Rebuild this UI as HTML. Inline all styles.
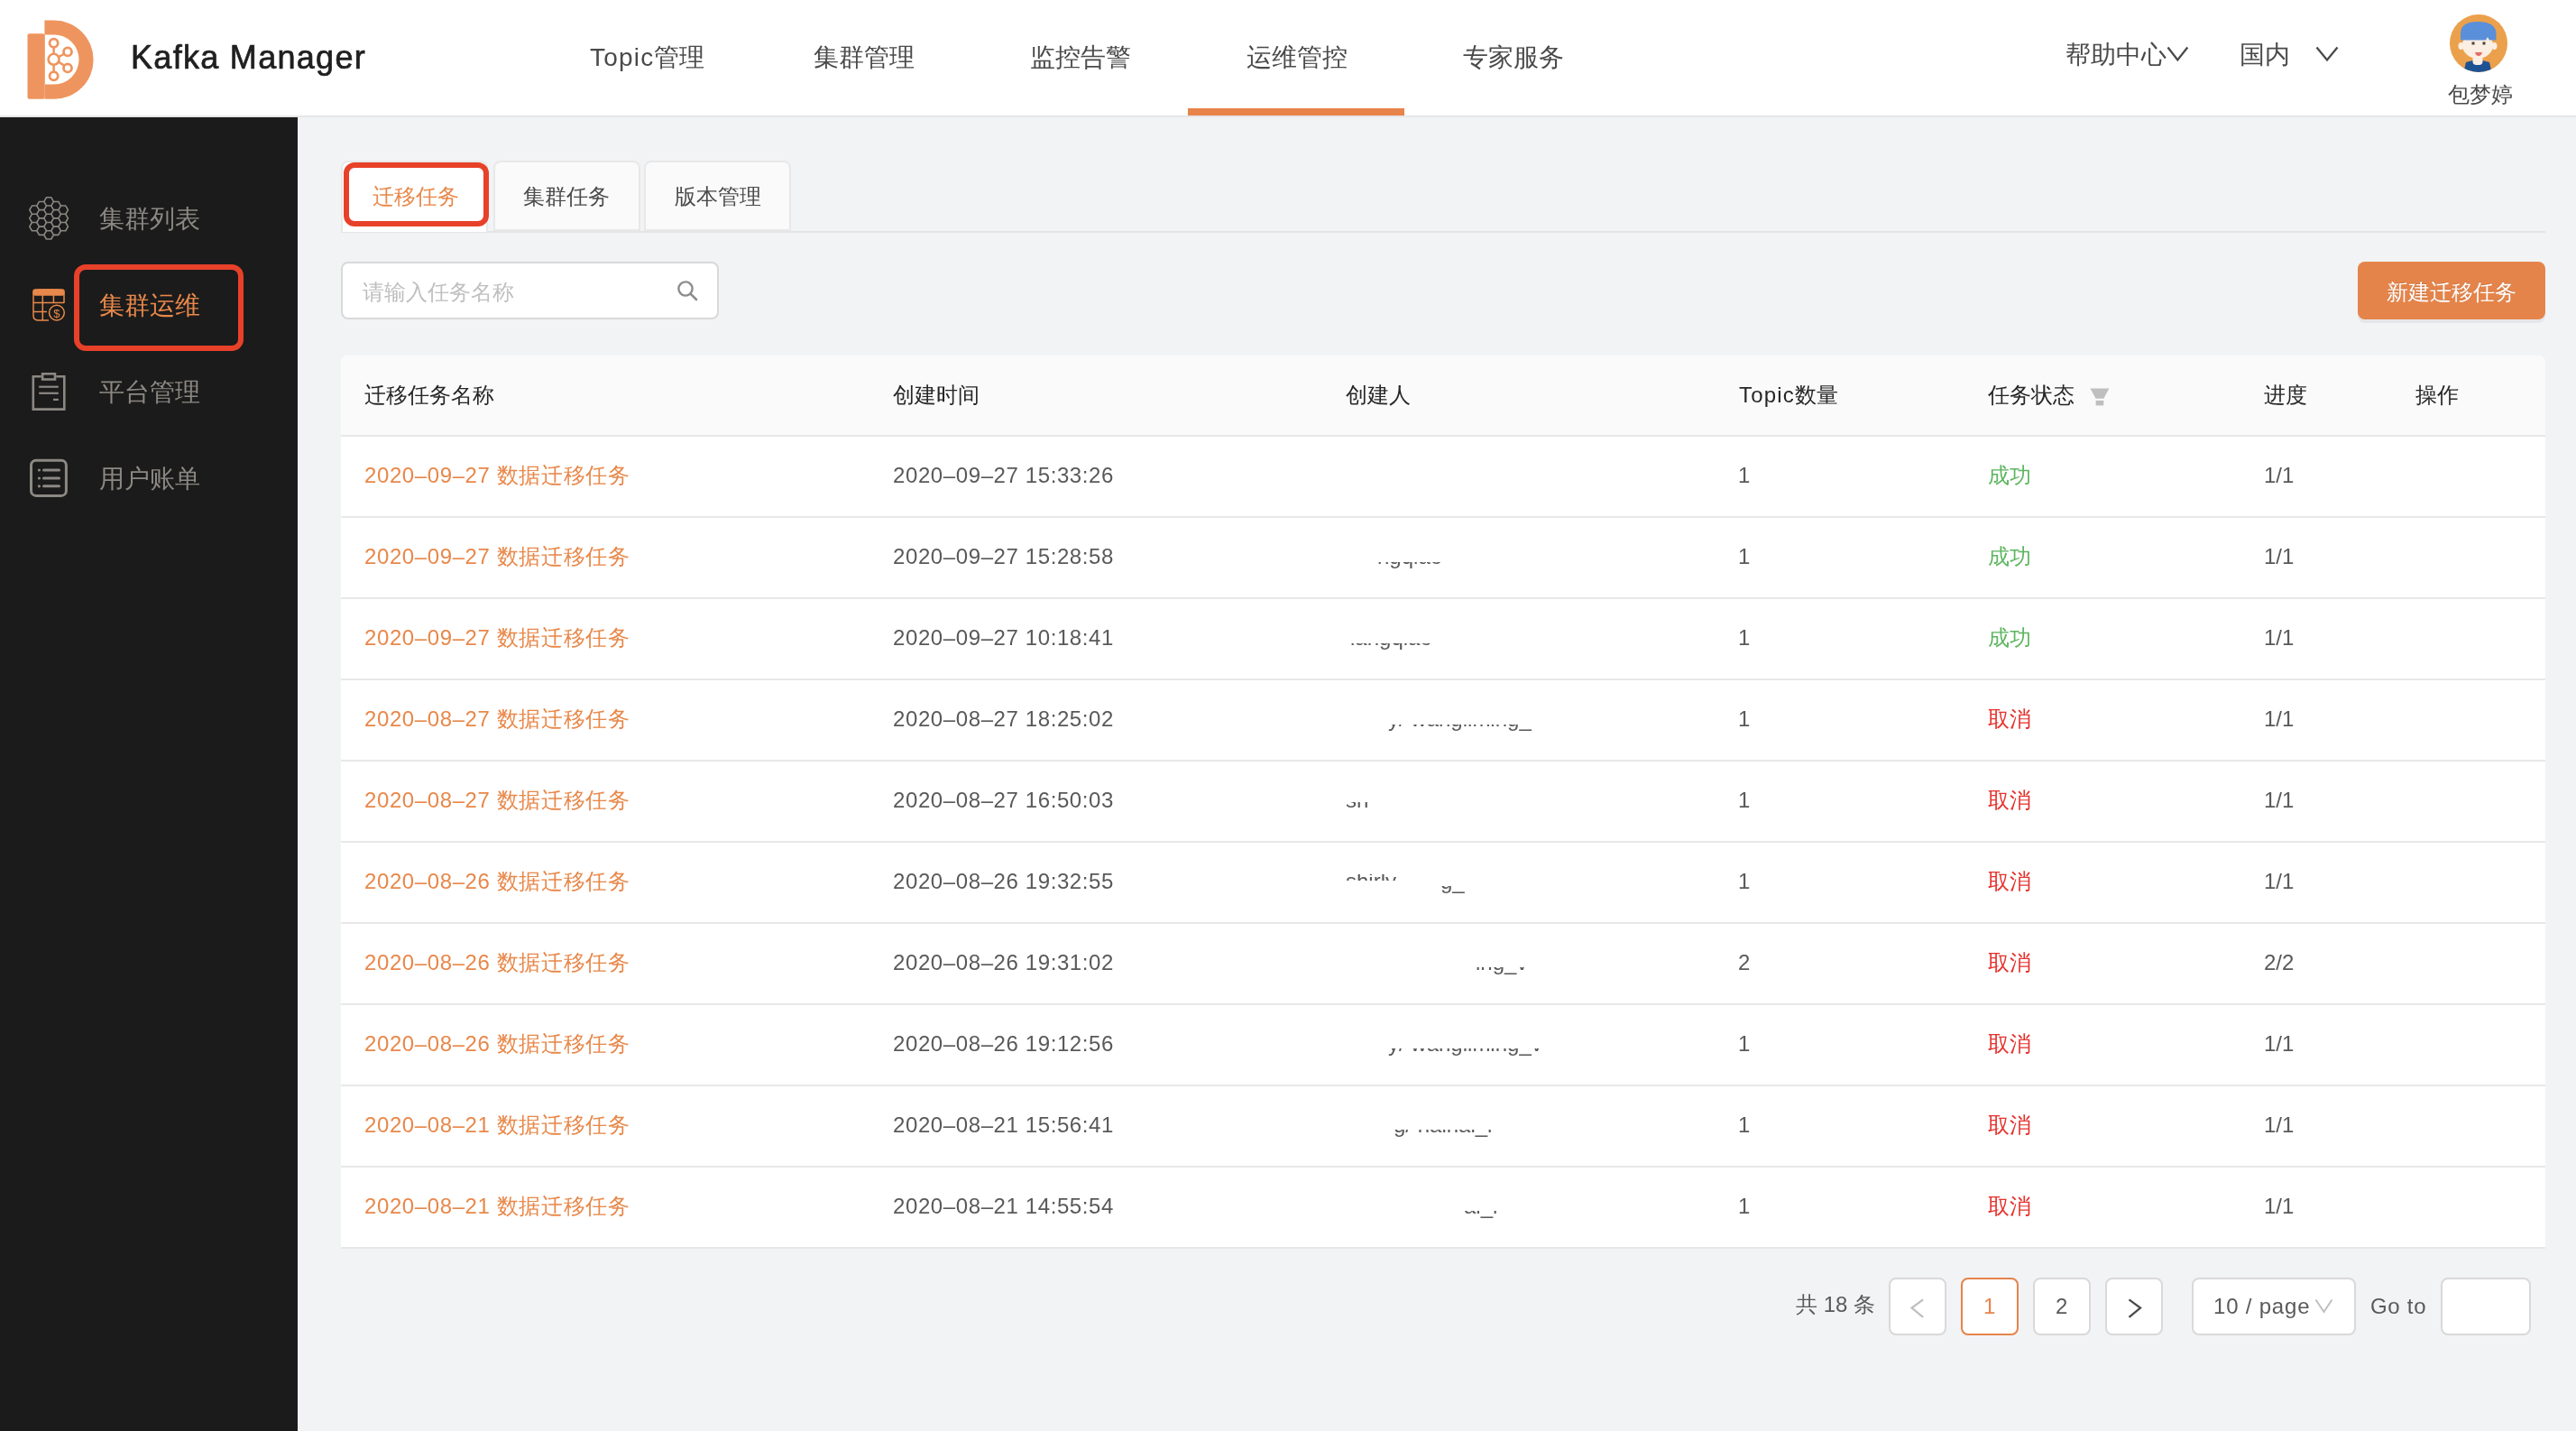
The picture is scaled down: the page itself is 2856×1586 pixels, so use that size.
<!DOCTYPE html>
<html><head><meta charset="utf-8">
<style>
*{box-sizing:border-box;margin:0;padding:0}
html,body{width:2856px;height:1586px;overflow:hidden}
body{position:relative;background:#f2f3f5;font-family:"Liberation Sans",sans-serif;color:#595959}
#root{position:absolute;left:0;top:0;width:2856px;height:1586px;background:#f2f3f5;will-change:transform;overflow:hidden}
.a{position:absolute;white-space:nowrap}
.nav{font-size:28px;line-height:28px;color:#4a4a4a}
.side{font-size:28px;line-height:28px;color:#8c8883}
.t24{font-size:24px;line-height:24px}
.box{position:absolute;background:#fff;border:2px solid #d9d9d9;border-radius:8px}
.th{color:#262626}
.td{color:#595959}
.lk{color:#e8884a}
.ls{letter-spacing:1.2px}
.dt{letter-spacing:0.6px}
.clip{position:absolute;overflow:hidden}
.clip span{position:absolute;left:0;white-space:nowrap;font-size:24px;line-height:24px;color:#595959}
</style></head><body><div id="root">
<div class="a" style="left:0;top:0;width:2856px;height:128px;background:#fff"></div>
<div class="a" style="left:0;top:128px;width:2856px;height:2px;background:#e6e6e6"></div>
<div class="a" style="left:0;top:130px;width:330px;height:1456px;background:#1b1b1b"></div>

<svg class="a" style="left:0;top:0" width="130" height="128" viewBox="0 0 130 128">
  <rect x="30.5" y="37.3" width="19" height="72.5" rx="2" fill="#ee955f"/>
  <path d="M49.4 22.6 H60 A43.6 43.6 0 0 1 60 109.8 H49.4 Z M50 38.5 V93.5 H60 A27.5 27.5 0 0 0 60 38.5 Z" fill="#ee955f" fill-rule="evenodd"/>
  <g fill="none" stroke="#ee955f" stroke-width="2">
    <circle cx="59.6" cy="65.8" r="6" stroke-width="2.6"/>
    <circle cx="59.6" cy="47.7" r="4.6" stroke-width="2.8"/>
    <circle cx="75" cy="57.4" r="4.5" stroke-width="2.8"/>
    <circle cx="75" cy="75.4" r="4.5" stroke-width="2.8"/>
    <circle cx="59.6" cy="84.2" r="4.6" stroke-width="2.8"/>
    <path d="M59.6 52.7 V59.5 M59.6 72.1 V79.2 M65.2 62.8 L70.8 60 M65.2 68.8 L70.8 72.4" stroke-width="2.5"/>
  </g>
</svg>
<div class="a" style="left:145px;top:46px;font-size:36px;line-height:36px;color:#1f1f1f;letter-spacing:1.3px;-webkit-text-stroke:0.7px #1f1f1f">Kafka Manager</div>

<div class="a nav" style="left:654px;top:50px"><span class="ls">Topic</span>管理</div>
<div class="a nav" style="left:902px;top:50px">集群管理</div>
<div class="a nav" style="left:1142px;top:50px">监控告警</div>
<div class="a nav" style="left:1382px;top:50px">运维管控</div>
<div class="a nav" style="left:1622px;top:50px">专家服务</div>
<div class="a" style="left:1317px;top:120px;width:240px;height:8px;background:#e8834a"></div>

<div class="a nav" style="left:2290px;top:47px">帮助中心</div>
<svg class="a" style="left:2400px;top:50px" width="30" height="20"><path d="M3.5 2.5 L14.3 16.5 L25.3 2.5" fill="none" stroke="#4a4a4a" stroke-width="2.3"/></svg>
<div class="a nav" style="left:2483px;top:47px">国内</div>
<svg class="a" style="left:2565px;top:50px" width="30" height="20"><path d="M3.5 2.5 L15 16.5 L26.5 2.5" fill="none" stroke="#4a4a4a" stroke-width="2.3"/></svg>

<svg class="a" style="left:2715px;top:15px" width="66" height="66" viewBox="2715 15 66 66">
  <defs><clipPath id="cc"><circle cx="2748" cy="48" r="32"/></clipPath></defs>
  <circle cx="2748" cy="48" r="32" fill="#eba04b"/>
  <g clip-path="url(#cc)">
    <path d="M2734 69 Q2747 64 2760 69 L2763 82 H2731 Z" fill="#1f5293"/>
    <rect x="2741.5" y="60" width="11" height="12" rx="4" fill="#fbeee2"/>
    <ellipse cx="2747" cy="50" rx="17" ry="15" fill="#fbeee2"/>
    <ellipse cx="2728.5" cy="51" rx="3" ry="4" fill="#fbeee2"/>
    <ellipse cx="2765.5" cy="51" rx="3" ry="4" fill="#fbeee2"/>
    <path d="M2728 44.5 V36 Q2729 24 2747 24 Q2766 24 2767.5 36 V44.5 H2760 L2758 41 L2756 44.5 Z" fill="#5a8fd9"/>
    <rect x="2740.5" y="46.5" width="3" height="3" fill="#4a4040"/>
    <rect x="2752.5" y="46.5" width="3" height="3" fill="#4a4040"/>
    <path d="M2744 58 H2752 Q2751 62 2748 62 Q2745 62 2744 58 Z" fill="#e86a6a"/>
  </g>
</svg>
<div class="a" style="left:2714px;top:93px;font-size:23.5px;line-height:24px;color:#4a4a4a">包梦婷</div>

<div class="a side" style="left:110px;top:229px">集群列表</div>
<div class="a side" style="left:110px;top:325px;color:#e8884a">集群运维</div>
<div class="a side" style="left:110px;top:421px">平台管理</div>
<div class="a side" style="left:110px;top:517px">用户账单</div>
<div class="a" style="left:82px;top:293px;width:188px;height:96px;border:6px solid #e8412a;border-radius:13px"></div>

<svg class="a" style="left:0;top:130px" width="100" height="450" viewBox="0 130 100 450">
  <path d="M43.44 232.67 L40.77 237.28 L35.45 237.28 L32.78 232.67 L35.45 228.05 L40.77 228.05Z M43.44 241.90 L40.77 246.52 L35.45 246.52 L32.78 241.90 L35.45 237.28 L40.77 237.28Z M43.44 251.13 L40.77 255.75 L35.45 255.75 L32.78 251.13 L35.45 246.52 L40.77 246.52Z M51.44 228.05 L48.77 232.67 L43.44 232.67 L40.78 228.05 L43.44 223.44 L48.77 223.44Z M51.44 237.28 L48.77 241.90 L43.44 241.90 L40.78 237.28 L43.44 232.67 L48.77 232.67Z M51.44 246.52 L48.77 251.13 L43.44 251.13 L40.78 246.52 L43.44 241.90 L48.77 241.90Z M51.44 255.75 L48.77 260.36 L43.44 260.36 L40.78 255.75 L43.44 251.13 L48.77 251.13Z M59.43 223.44 L56.77 228.05 L51.44 228.05 L48.77 223.44 L51.44 218.82 L56.77 218.82Z M59.43 232.67 L56.77 237.28 L51.44 237.28 L48.77 232.67 L51.44 228.05 L56.77 228.05Z M59.43 241.90 L56.77 246.52 L51.44 246.52 L48.77 241.90 L51.44 237.28 L56.77 237.28Z M59.43 251.13 L56.77 255.75 L51.44 255.75 L48.77 251.13 L51.44 246.52 L56.77 246.52Z M59.43 260.36 L56.77 264.98 L51.44 264.98 L48.77 260.36 L51.44 255.75 L56.77 255.75Z M67.42 228.05 L64.76 232.67 L59.43 232.67 L56.77 228.05 L59.43 223.44 L64.76 223.44Z M67.42 237.28 L64.76 241.90 L59.43 241.90 L56.77 237.28 L59.43 232.67 L64.76 232.67Z M67.42 246.52 L64.76 251.13 L59.43 251.13 L56.77 246.52 L59.43 241.90 L64.76 241.90Z M67.42 255.75 L64.76 260.36 L59.43 260.36 L56.77 255.75 L59.43 251.13 L64.76 251.13Z M75.42 232.67 L72.76 237.28 L67.43 237.28 L64.76 232.67 L67.42 228.05 L72.76 228.05Z M75.42 241.90 L72.76 246.52 L67.43 246.52 L64.76 241.90 L67.42 237.28 L72.76 237.28Z M75.42 251.13 L72.76 255.75 L67.43 255.75 L64.76 251.13 L67.42 246.52 L72.76 246.52Z" fill="none" stroke="#8c8883" stroke-width="1.6" stroke-linejoin="round"/>
  <g fill="none" stroke="#e8884a" stroke-width="1.5">
    <path d="M37 345 V327 Q37 321 43 321 H65 Q71 321 71 327 V336"/>
    <path d="M37 345 V350 Q37 355 43 355 H54"/>
    <path d="M37 335.5 H71 M37 345.6 H52 M47.3 327 V355 M59.4 327 V336"/>
    <circle cx="62.9" cy="346.6" r="8.4"/>
  </g>
  <rect x="36.2" y="320.2" width="35.6" height="7.5" rx="3" fill="#e8884a"/>
  <text x="62.9" y="351.5" font-size="13" text-anchor="middle" fill="#e8884a" font-family="Liberation Sans">$</text>
  <g fill="none" stroke="#8c8883" stroke-width="2.6">
    <path d="M45.8 417.3 H36.8 V453.6 H71.3 V417.3 H62.3"/>
    <rect x="47.1" y="414.3" width="13.9" height="6.2"/>
  </g>
  <g fill="#8c8883">
    <rect x="43.2" y="427.6" width="21.6" height="2.2"/>
    <rect x="43.2" y="434.7" width="21.6" height="2.2"/>
    <rect x="59" y="441.8" width="5.8" height="2.2"/>
  </g>
  <rect x="34.5" y="510.3" width="38.9" height="39.1" rx="5.5" fill="none" stroke="#8c8883" stroke-width="3"/>
  <g fill="#8c8883"><circle cx="43.4" cy="521" r="1.6"/><circle cx="43.4" cy="530" r="1.6"/><circle cx="43.4" cy="538.8" r="1.6"/></g>
  <path d="M48.5 521 H65.5 M48.5 530 H65.5 M48.5 538.8 H65.5" stroke="#8c8883" stroke-width="3" stroke-linecap="round"/>
</svg>

<div class="a" style="left:378px;top:256px;width:2444px;height:2px;background:#e3e4e6"></div>
<div class="a" style="left:378px;top:178px;width:163px;height:79px;background:#fff;border:2px solid #e8e8e8;border-bottom:none;border-radius:8px 8px 0 0"></div>
<div class="a" style="left:547px;top:178px;width:163px;height:78px;background:#fafafa;border:2px solid #e8e8e8;border-radius:8px 8px 0 0"></div>
<div class="a" style="left:714px;top:178px;width:163px;height:78px;background:#fafafa;border:2px solid #e8e8e8;border-radius:8px 8px 0 0"></div>
<div class="a t24" style="left:413px;top:206px;color:#e8884a">迁移任务</div>
<div class="a t24" style="left:580px;top:206px;color:#4a4a4a">集群任务</div>
<div class="a t24" style="left:748px;top:206px;color:#4a4a4a">版本管理</div>
<div class="a" style="left:381px;top:180px;width:161px;height:71px;border:6px solid #e8412a;border-radius:12px"></div>

<div class="box" style="left:378px;top:290px;width:419px;height:64px"></div>
<div class="a t24" style="left:402px;top:312px;color:#bfbfbf">请输入任务名称</div>
<svg class="a" style="left:748px;top:308px" width="30" height="30"><circle cx="12" cy="12" r="7.6" fill="none" stroke="#8c8c8c" stroke-width="2.4"/><path d="M17.6 17.6 L24 24" stroke="#8c8c8c" stroke-width="2.6" stroke-linecap="round"/></svg>

<div class="a" style="left:2614px;top:290px;width:208px;height:64px;background:#e5844a;border-radius:8px;box-shadow:0 4px 0 rgba(0,0,0,.05)"></div>
<div class="a t24" style="left:2646px;top:312px;color:#fff;text-shadow:0 -1px 0 rgba(0,0,0,.12)">新建迁移任务</div>

<div class="a" style="left:378px;top:394px;width:2444px;height:990px;background:#fff;border-radius:8px 8px 0 0"></div>
<div class="a" style="left:378px;top:394px;width:2444px;height:88px;background:#fafafa;border-radius:8px 8px 0 0"></div>
<div class="a" style="left:378px;top:482px;width:2444px;height:2px;background:#e8e8e8"></div>

<div class="a t24 th" style="left:404px;top:426px">迁移任务名称</div>
<div class="a t24 th" style="left:990px;top:426px">创建时间</div>
<div class="a t24 th" style="left:1492px;top:426px">创建人</div>
<div class="a t24 th" style="left:1928px;top:426px"><span class="ls">Topic</span>数量</div>
<div class="a t24 th" style="left:2204px;top:426px">任务状态</div>
<div class="a t24 th" style="left:2510px;top:426px">进度</div>
<div class="a t24 th" style="left:2678px;top:426px">操作</div>
<svg class="a" style="left:2316px;top:429px" width="24" height="22"><path d="M1.4 1.5 H22.4 L16.3 12.7 H7.6 Z" fill="#bfbfbf"/><rect x="7.6" y="14.9" width="8.7" height="5.5" fill="#bfbfbf"/></svg>
<div class="a" style="left:378px;top:572px;width:2444px;height:2px;background:#e8e8e8"></div>
<div class="a t24 lk dt" style="left:404px;top:515px">2020–09–27 数据迁移任务</div>
<div class="a t24 td dt" style="left:990px;top:515px">2020–09–27 15:33:26</div>
<div class="a t24 td" style="left:1927px;top:515px">1</div>
<div class="a t24" style="left:2204px;top:515px;color:#5cb55f">成功</div>
<div class="a t24 td" style="left:2510px;top:515px">1/1</div>
<div class="a" style="left:378px;top:662px;width:2444px;height:2px;background:#e8e8e8"></div>
<div class="a t24 lk dt" style="left:404px;top:605px">2020–09–27 数据迁移任务</div>
<div class="a t24 td dt" style="left:990px;top:605px">2020–09–27 15:28:58</div>
<div class="a t24 td" style="left:1927px;top:605px">1</div>
<div class="a t24" style="left:2204px;top:605px;color:#5cb55f">成功</div>
<div class="a t24 td" style="left:2510px;top:605px">1/1</div>
<div class="a" style="left:378px;top:752px;width:2444px;height:2px;background:#e8e8e8"></div>
<div class="a t24 lk dt" style="left:404px;top:695px">2020–09–27 数据迁移任务</div>
<div class="a t24 td dt" style="left:990px;top:695px">2020–09–27 10:18:41</div>
<div class="a t24 td" style="left:1927px;top:695px">1</div>
<div class="a t24" style="left:2204px;top:695px;color:#5cb55f">成功</div>
<div class="a t24 td" style="left:2510px;top:695px">1/1</div>
<div class="a" style="left:378px;top:842px;width:2444px;height:2px;background:#e8e8e8"></div>
<div class="a t24 lk dt" style="left:404px;top:785px">2020–08–27 数据迁移任务</div>
<div class="a t24 td dt" style="left:990px;top:785px">2020–08–27 18:25:02</div>
<div class="a t24 td" style="left:1927px;top:785px">1</div>
<div class="a t24" style="left:2204px;top:785px;color:#e5312c">取消</div>
<div class="a t24 td" style="left:2510px;top:785px">1/1</div>
<div class="a" style="left:378px;top:932px;width:2444px;height:2px;background:#e8e8e8"></div>
<div class="a t24 lk dt" style="left:404px;top:875px">2020–08–27 数据迁移任务</div>
<div class="a t24 td dt" style="left:990px;top:875px">2020–08–27 16:50:03</div>
<div class="a t24 td" style="left:1927px;top:875px">1</div>
<div class="a t24" style="left:2204px;top:875px;color:#e5312c">取消</div>
<div class="a t24 td" style="left:2510px;top:875px">1/1</div>
<div class="a" style="left:378px;top:1022px;width:2444px;height:2px;background:#e8e8e8"></div>
<div class="a t24 lk dt" style="left:404px;top:965px">2020–08–26 数据迁移任务</div>
<div class="a t24 td dt" style="left:990px;top:965px">2020–08–26 19:32:55</div>
<div class="a t24 td" style="left:1927px;top:965px">1</div>
<div class="a t24" style="left:2204px;top:965px;color:#e5312c">取消</div>
<div class="a t24 td" style="left:2510px;top:965px">1/1</div>
<div class="a" style="left:378px;top:1112px;width:2444px;height:2px;background:#e8e8e8"></div>
<div class="a t24 lk dt" style="left:404px;top:1055px">2020–08–26 数据迁移任务</div>
<div class="a t24 td dt" style="left:990px;top:1055px">2020–08–26 19:31:02</div>
<div class="a t24 td" style="left:1927px;top:1055px">2</div>
<div class="a t24" style="left:2204px;top:1055px;color:#e5312c">取消</div>
<div class="a t24 td" style="left:2510px;top:1055px">2/2</div>
<div class="a" style="left:378px;top:1202px;width:2444px;height:2px;background:#e8e8e8"></div>
<div class="a t24 lk dt" style="left:404px;top:1145px">2020–08–26 数据迁移任务</div>
<div class="a t24 td dt" style="left:990px;top:1145px">2020–08–26 19:12:56</div>
<div class="a t24 td" style="left:1927px;top:1145px">1</div>
<div class="a t24" style="left:2204px;top:1145px;color:#e5312c">取消</div>
<div class="a t24 td" style="left:2510px;top:1145px">1/1</div>
<div class="a" style="left:378px;top:1292px;width:2444px;height:2px;background:#e8e8e8"></div>
<div class="a t24 lk dt" style="left:404px;top:1235px">2020–08–21 数据迁移任务</div>
<div class="a t24 td dt" style="left:990px;top:1235px">2020–08–21 15:56:41</div>
<div class="a t24 td" style="left:1927px;top:1235px">1</div>
<div class="a t24" style="left:2204px;top:1235px;color:#e5312c">取消</div>
<div class="a t24 td" style="left:2510px;top:1235px">1/1</div>
<div class="a" style="left:378px;top:1382px;width:2444px;height:2px;background:#e8e8e8"></div>
<div class="a t24 lk dt" style="left:404px;top:1325px">2020–08–21 数据迁移任务</div>
<div class="a t24 td dt" style="left:990px;top:1325px">2020–08–21 14:55:54</div>
<div class="a t24 td" style="left:1927px;top:1325px">1</div>
<div class="a t24" style="left:2204px;top:1325px;color:#e5312c">取消</div>
<div class="a t24 td" style="left:2510px;top:1325px">1/1</div>
<div class="clip" style="left:1527px;top:623px;width:200px;height:9px"><span style="top:-18px">ngqiao</span></div>
<div class="clip" style="left:1497px;top:713px;width:200px;height:9px"><span style="top:-18px">iangqiao</span></div>
<div class="clip" style="left:1539px;top:803px;width:200px;height:10px"><span style="top:-18px">y/ wangliming_</span></div>
<div class="clip" style="left:1492px;top:889px;width:200px;height:7px"><span style="top:-14px">sh</span></div>
<div class="clip" style="left:1492px;top:969px;width:200px;height:7px"><span style="top:-4px">shirly</span></div>
<div class="clip" style="left:1597px;top:982px;width:200px;height:10px"><span style="top:-17px">g_</span></div>
<div class="clip" style="left:1636px;top:1072px;width:200px;height:10px"><span style="top:-17px">ing_v</span></div>
<div class="clip" style="left:1539px;top:1162px;width:200px;height:10px"><span style="top:-17px">y/ wangliming_v</span></div>
<div class="clip" style="left:1545px;top:1252px;width:200px;height:10px"><span style="top:-17px">g/ haihai_l</span></div>
<div class="clip" style="left:1623px;top:1342px;width:200px;height:10px"><span style="top:-17px">ai_l</span></div>

<div class="a t24 td" style="left:1991px;top:1434px">共 18 条</div>
<div class="box" style="left:2094px;top:1416px;width:64px;height:64px"></div>
<div class="box" style="left:2174px;top:1416px;width:64px;height:64px;border-color:#e5844a"></div>
<div class="box" style="left:2254px;top:1416px;width:64px;height:64px"></div>
<div class="box" style="left:2334px;top:1416px;width:64px;height:64px"></div>
<div class="box" style="left:2430px;top:1416px;width:182px;height:64px"></div>
<div class="box" style="left:2706px;top:1416px;width:100px;height:64px"></div>
<svg class="a" style="left:2110px;top:1436px" width="30" height="30"><path d="M22.1 4.4 L9.6 13.6 L22.1 23.9" fill="none" stroke="#bfbfbf" stroke-width="2.3"/></svg>
<svg class="a" style="left:2350px;top:1436px" width="30" height="30"><path d="M10.5 4.4 L23 13.6 L10.5 23.9" fill="none" stroke="#4a4a4a" stroke-width="2.3"/></svg>
<div class="a t24" style="left:2199px;top:1436px;color:#e5844a">1</div>
<div class="a t24 td" style="left:2279px;top:1436px">2</div>
<div class="a t24 td" style="left:2454px;top:1436px;letter-spacing:0.8px">10 / page</div>
<svg class="a" style="left:2566px;top:1438px" width="22" height="20"><path d="M1.5 2.5 L10.5 16 L19.5 2.5" fill="none" stroke="#bfbfbf" stroke-width="2"/></svg>
<div class="a t24 td" style="left:2628px;top:1436px;letter-spacing:0.7px">Go to</div>
</div></body></html>
